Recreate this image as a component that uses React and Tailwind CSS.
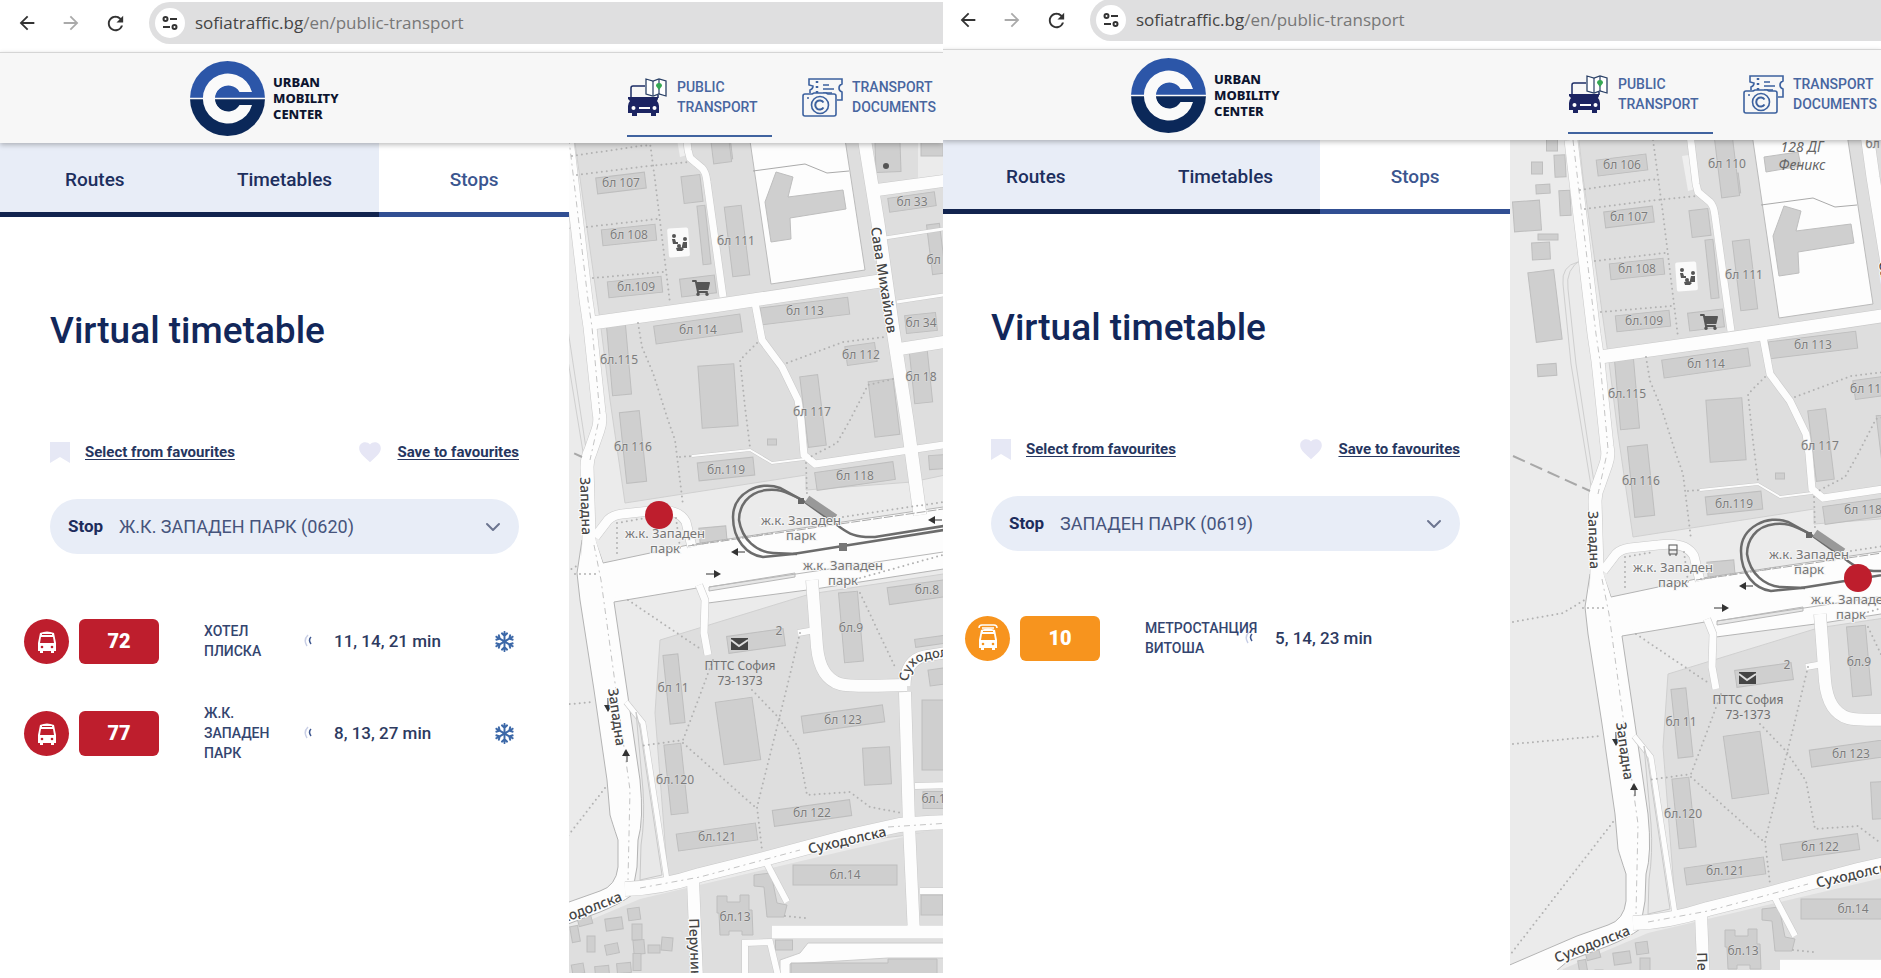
import { ChevronDown } from "lucide-react";
import { FaRegSnowflake, FaShoppingCart } from "react-icons/fa";
import { MdArrowBack, MdArrowForward, MdFavorite, MdRefresh } from "react-icons/md";

const leftView = {
  id: "left",
  stop: "Ж.К. ЗАПАДЕН ПАРК (0620)",
  origin: [569, 143],
  marker: [659, 515],
  lines: [
    { number: "72", type: "bus", direction: "ХОТЕЛ ПЛИСКА", times: "11, 14, 21 min", cooled: true },
    { number: "77", type: "bus", direction: "Ж.К. ЗАПАДЕН ПАРК", times: "8, 13, 27 min", cooled: true },
  ],
};

const rightView = {
  id: "right",
  stop: "ЗАПАДЕН ПАРК (0619)",
  origin: [502, 106],
  marker: [850, 544],
  lines: [
    { number: "10", type: "tram", direction: "МЕТРОСТАНЦИЯ ВИТОША", times: "5, 14, 23 min", cooled: false },
  ],
};

// [centre x, centre y, width, height, rotation]
const buildings = [
  [614, 131, 50, 16, -7], [621, 183, 49, 16, -7], [629, 235, 54, 16, -6], [635, 287, 54, 16, -6],
  [912, 202, 47, 14, -8], [698, 329, 87, 18, -8], [805, 311, 88, 17, -7], [921, 323, 31, 18, -6],
  [861, 354, 30, 19, -8], [726, 469, 56, 18, -6], [855, 476, 79, 18, -8], [918, 592, 60, 17, -8],
  [698, 286, 35, 18, -7], [843, 719, 82, 17, -8], [812, 813, 78, 16, -8], [717, 837, 80, 17, -8],
  [845, 875, 104, 20, 0], [756, 641, 57, 17, -8], [713, 535, 27, 16, -5], [692, 189, 19, 27, -7],
  [704, 235, 8, 59, -6], [737, 241, 17, 70, -7], [723, 150, 17, 20, -7], [719, 133, 18, 60, -7],
  [619, 360, 19, 70, -5], [633, 447, 20, 71, -6], [718, 396, 36, 62, -4], [813, 411, 18, 71, -7],
  [772, 442, 9, 6, 0], [921, 377, 18, 52, -6], [884, 408, 25, 56, -7], [936, 249, 13, 50, -7],
  [888, 157, 25, 30, -2], [932, 148, 22, 16, 0], [938, 462, 18, 14, -4], [851, 627, 19, 70, -5],
  [674, 689, 15, 69, -6], [676, 779, 17, 70, -6], [738, 731, 37, 63, -8], [877, 766, 27, 37, -3],
  [934, 735, 24, 70, 0], [934, 800, 22, 17, 0], [932, 905, 22, 20, 0], [932, 641, 34, 8, -8],
  [937, 677, 16, 16, -8], [784, 945, 17, 10, 0],
  [585, 921, 14, 8, -15], [575, 934, 8, 16, -10], [591, 944, 8, 16, 0], [614, 924, 17, 12, -8],
  [612, 949, 13, 10, -12], [634, 914, 12, 12, -8], [637, 932, 10, 16, 0], [639, 947, 11, 14, -5],
  [637, 962, 8, 17, 0], [654, 949, 12, 8, 0], [667, 944, 11, 13, 5], [578, 969, 12, 10, -10],
  [602, 970, 14, 8, -5], [624, 968, 14, 10, -5],
  [544, 110, 11, 14, 0], [529, 134, 11, 12, 0], [552, 132, 11, 22, -3], [535, 155, 14, 9, -3],
  [557, 169, 11, 25, -3], [519, 182, 27, 30, -4], [540, 203, 20, 6, 0], [533, 217, 18, 17, -3],
  [537, 272, 26, 70, -7], [539, 336, 19, 12, -4],
];

const shapes = [
  "776,172 793,177 788,197 843,190 846,209 790,218 791,239 771,242 765,202",
  "756,123 790,118 793,132 758,138",
  "717,896 727,896 727,902 740,902 740,895 749,895 749,910 752,910 753,935 742,935 742,931 729,931 729,935 720,935 719,913 717,913",
  "754,875 771,873 777,903 787,905 784,917 767,917 764,887 754,886",
  "791,963 888,963 888,959 937,959 937,980 791,980",
];

const roads = [
  { d: "M563 106L586 300L590 327L599 412Q601 422 598 430L591 450Q587 458 587 467L589 535L588 570", w: 13 },
  { d: "M592 323L720 305L880 281", w: 13 },
  { d: "M859 100L865 143L878 223L893 330L907 420L920 515", w: 13 },
  { d: "M877 190L950 180M893 350L950 341", w: 12 },
  { d: "M682 100L688 150L690 158L702 168Q706 172 707 182L723 297", w: 7 },
  { d: "M755 303L762 340L782 367L798 400L801 420L804 455L815 464L950 444", w: 7 },
  { d: "M595 537L608 520Q613 515 622 514L650 511Q678 507 686 522L692 547", w: 9 },
  { d: "M812 580L817 647Q820 678 840 684Q850 687 907 685", w: 12 },
  { d: "M905 692L909 825L914 935", w: 12 },
  { d: "M905 686Q905 660 925 656L950 652", w: 11 },
  { d: "M915 786L950 785M920 891L950 891M798 633L815 630", w: 6 },
  { d: "M699 585L705 600L704 633L708 655", w: 7 },
  { d: "M626 702L643 723L667 880", w: 5 },
  { d: "M625 889Q660 888 700 875L760 860L850 836L900 825Q920 823 950 822", w: 14 },
  { d: "M693 880L697 980", w: 12 },
  { d: "M766 862L787 902", w: 6 },
  { d: "M772 932L950 932", w: 13 },
  { d: "M745 980L745 943L770 942L779 980", w: 6 },
  { d: "M692 456L750 450L772 463L804 459", w: 2 },
  { d: "M885 238L950 228M897 302L950 294", w: 3 },
];

const footpaths =
  "M572 156L640 146L650 145M577 175L640 167L690 162M645 106L655 180L670 303M587 227L657 219M593 278L663 272" +
  "M638 323L642 347L653 373L668 420L675 440L683 505M757 343L740 360L745 407L750 447" +
  "M787 363L843 342L885 337M893 379L868 385L850 420L837 443L810 457M806 463L807 495" +
  "M628 600L702 650M860 593L895 667M800 633L787 687L778 723L757 807L762 850" +
  "M713 660L700 695L683 740L640 746M683 743L755 807M752 690L778 717L798 747L807 795L850 792L870 807L902 813" +
  "M505 710L593 702M605 788L502 921M843 517L943 502M693 545L773 533M617 523L646 518M617 523L617 556" +
  "M505 588L555 579L580 564M575 574L597 574M676 518L680 548M785 916L805 918M860 578L950 553M680 457L692 456";

const labels = [
  [614, 131, "бл 106"], [621, 183, "бл 107"], [629, 235, "бл 108"], [636, 287, "бл.109"],
  [719, 130, "бл 110"], [736, 241, "бл 111"], [698, 330, "бл 114"], [805, 311, "бл 113"],
  [912, 202, "бл 33"], [921, 323, "бл 34"], [861, 355, "бл 112"], [921, 377, "бл 18"],
  [619, 360, "бл.115"], [633, 447, "бл 116"], [812, 412, "бл 117"], [726, 470, "бл.119"],
  [855, 476, "бл 118"], [927, 590, "бл.8"], [851, 628, "бл.9"], [673, 688, "бл 11"],
  [843, 720, "бл 123"], [675, 780, "бл.120"], [812, 813, "бл 122"], [717, 837, "бл.121"],
  [845, 875, "бл.14"], [735, 917, "бл.13"], [942, 260, "бл 32"], [937, 799, "бл.16"],
  [873, 110, "бл 31"], [779, 631, "2"],
];

const streets = [
  [884, 280, 81, "Сава Михайлов"],
  [586, 506, 88, "Западна"],
  [617, 717, 82, "Западна"],
  [847, 840, -13, "Суходолска"],
  [584, 910, -21, "Суходолска"],
  [695, 948, 88, "Перуник"],
];

function BrowserBar() {
  return (
    <div className="flex h-[52px] items-start bg-white pt-0.5">
      <div className="flex h-[42px] w-[149px] shrink-0 items-center gap-[22px] pl-4">
        <button type="button" aria-label="Back" className="text-[#333]">
          <MdArrowBack size={22} />
        </button>
        <button type="button" aria-label="Forward" className="text-[#aaa]">
          <MdArrowForward size={22} />
        </button>
        <button type="button" aria-label="Reload" className="text-[#333]">
          <MdRefresh size={23} />
        </button>
      </div>
      <div className="flex h-[42px] min-w-0 flex-1 items-center gap-2.5 rounded-l-full bg-[#dfdfe0] pl-1.5">
        <span className="flex size-[30px] shrink-0 items-center justify-center rounded-full bg-white">
          <svg width="16" height="14" viewBox="0 0 16 14" fill="none" stroke="#333" strokeWidth="2">
            <circle cx="3.5" cy="3" r="2" />
            <path d="M8 3h7M1 11h7" />
            <circle cx="12.5" cy="11" r="2" />
          </svg>
        </span>
        <span className="truncate font-['Open_Sans',sans-serif] text-[17px] leading-6 text-[#777]">
          <span className="text-[#444]">sofiatraffic.bg</span>/en/public-transport
        </span>
      </div>
    </div>
  );
}

function Logo() {
  return (
    <a href="#" className="flex w-[437px] shrink-0 items-center gap-2">
      <svg width="75" height="75" viewBox="0 0 75 75">
        <path d="M0 37.5a37.5 37.5 0 0 1 75 0z" fill="#2c56a8" />
        <path d="M0 37.5a37.5 37.5 0 0 0 75 0z" fill="#0b2859" />
        <path
          d="M62 31H49.5A13 13 0 1 0 49.5 44H62A25 25 0 1 1 62 31z"
          fill="#fafafa"
        />
        <path d="M25 37a12.500 12.500 0 0 1 23-6H62v6z" fill="#2c56a8" />
        <path d="M25 38a12.500 12.500 0 0 0 23 6H62v-6z" fill="#0b2859" />
        <path d="M0 37.500H75" stroke="#fafafa" strokeWidth="1.500" />
      </svg>
      <span className="font-['Noto_Sans',sans-serif] text-[13px] leading-4 font-extrabold text-[#0d1530]">
        URBAN
        <br />
        MOBILITY
        <br />
        CENTER
      </span>
    </a>
  );
}

function TransportIcon() {
  return (
    <svg width="40" height="40" viewBox="0 0 40 40" fill="none">
      <path d="M4 20V11Q4 9 6 9H18M31 18v3" stroke="#1c2d66" strokeWidth="1.500" />
      <path d="M19 2l7 2 6-2 7 2v15l-7-2-6 2-7-2z" fill="#fff" stroke="#2a4066" strokeWidth="1.300" />
      <path d="M26 4v15M32 2v15" stroke="#2a4066" strokeWidth="1.200" />
      <path d="M32 13l-3-4a3 3 0 1 1 6 0z" fill="#35a853" />
      <path
        d="M3 20h28v2l-1 2q2 2 2 5v7h-3v3h-5v-3H10v3H5v-3H1v-7q0-3 2-5l-2-2v-2z"
        fill="#1c2462"
      />
      <path d="M12 30h11v2H12z" fill="#fff" />
      <circle cx="6.500" cy="31" r="2" fill="#fff" />
      <circle cx="27.500" cy="31" r="2" fill="#fff" />
    </svg>
  );
}

function DocumentsIcon() {
  return (
    <svg width="42" height="40" viewBox="0 0 42 40" fill="none" stroke="#3c619f" strokeWidth="1.600">
      <path d="M8 16v-3q3-1 3-4L7 8V2h33v5q-3 1-3 4t3 4v8h-5" />
      <path d="M15 4v2M15 9v2M15 14v2" strokeWidth="2.500" />
      <path d="M21 8h6M21 12h11M21 16h9" />
      <path d="M10 17l2-1h12l2 1h6q2 0 2 2v18q0 2-2 2H3q-2 0-2-2V19q0-2 2-2z" fill="#f7f7f7" />
      <circle cx="18" cy="28" r="8.500" />
      <path d="M21.500 25.500a4.500 4.500 0 1 0 0 5" strokeWidth="2" />
      <path d="M5 21h2" />
    </svg>
  );
}

function Header() {
  return (
    <header className="relative z-10 flex h-[91px] overflow-clip border-t border-[#d5d5d5] bg-[#f7f7f7] pl-[190px] shadow-[0_2px_5px_rgba(0,0,0,0.25)] [overflow-clip-margin:8px]">
      <Logo />
      <nav className="flex shrink-0 gap-[30px] pt-6 text-sm leading-5 font-medium text-[#4866a0]">
        <a href="#" className="flex h-[60px] w-[145px] shrink-0 items-start gap-2.5 border-b-2 border-[#40639f]">
          <TransportIcon />
          <span>
            PUBLIC
            <br />
            TRANSPORT
          </span>
        </a>
        <a href="#" className="flex shrink-0 items-start gap-2">
          <DocumentsIcon />
          <span>
            TRANSPORT
            <br />
            DOCUMENTS
          </span>
        </a>
      </nav>
    </header>
  );
}

function Tabs() {
  return (
    <div role="tablist" className="grid h-[74px] grid-cols-3 text-[19px] leading-6 font-medium">
      <button type="button" role="tab" className="border-b-5 border-[#12244f] bg-[#e8edf7] pt-1 text-[#1d2f5e]">
        Routes
      </button>
      <button type="button" role="tab" className="border-b-5 border-[#12244f] bg-[#e8edf7] pt-1 text-[#1d2f5e]">
        Timetables
      </button>
      <button
        type="button"
        role="tab"
        aria-selected="true"
        className="border-b-5 border-[#314f93] bg-white pt-1 text-[#3b568f]"
      >
        Stops
      </button>
    </div>
  );
}

function VehicleIcon({ type }) {
  const color = type === "bus" ? "#be1e2d" : "#f7941e";
  return (
    <svg width="20" height="28" viewBox="0 0 20 28">
      {type === "tram" && <path d="M1 4q0-3 3-3h12q3 0 3 3M4 4h12" fill="none" stroke="#fff" strokeWidth="1.500" />}
      <path
        d="M3 6q7-3 14 0l2 10v8h-2v2h-3v-2H6v2H3v-2H1v-8z"
        fill="#fff"
      />
      <path d="M5 7h10v1H5zM4 10h12l1 6H3z" fill={color} />
      <circle cx="5" cy="20" r="1.300" fill={color} />
      <circle cx="15" cy="20" r="1.300" fill={color} />
    </svg>
  );
}

function LineRow({ line }) {
  const color = line.type === "bus" ? "bg-[#be1e2d]" : "bg-[#f7941e]";
  return (
    <li className="flex h-[92px] items-center">
      <span className={`flex size-[45px] shrink-0 items-center justify-center rounded-full ${color}`}>
        <VehicleIcon type={line.type} />
      </span>
      <span
        className={`ml-2.5 flex h-[45px] w-20 shrink-0 items-center justify-center rounded-md text-xl font-black text-white ${color}`}
      >
        {line.number}
      </span>
      <span className="ml-[45px] w-[100px] shrink-0 text-sm leading-5 font-medium text-[#34456f]">
        <span className="block w-[60px]">{line.direction}</span>
      </span>
      <svg width="10" height="14" viewBox="0 0 10 14" className="shrink-0" fill="none">
        <path d="M4 1Q-1 6 3 12" stroke="#c9cfe6" strokeWidth="1.500" />
        <path d="M7 3Q4 6 7 10" stroke="#3d568f" strokeWidth="1.500" />
      </svg>
      <span className="ml-5 flex-1 text-[17px] leading-6 font-medium whitespace-nowrap text-[#2d3a5f]">
        {line.times}
      </span>
      {line.cooled && <FaRegSnowflake size={21} className="shrink-0 text-[#3c68a8]" />}
    </li>
  );
}

function Timetable({ view }) {
  const selectId = `stop-${view.id}`;
  return (
    <div className="w-[569px] bg-white">
      <Tabs />
      <div className="px-[50px] pt-[90px]">
        <h1 className="text-[37px] leading-12 font-medium text-[#12275a]">Virtual timetable</h1>
        <div className="mt-[84px] flex items-center justify-between text-[15px] leading-6 font-bold text-[#26365f]">
          <a href="#" className="flex items-center gap-[15px] underline underline-offset-2">
            <svg width="20" height="21" viewBox="0 0 20 21" fill="#e6e8f5">
              <path d="M0 0h20v21l-10-6-10 6z" />
            </svg>
            Select from favourites
          </a>
          <a href="#" className="flex items-center gap-[14px] underline underline-offset-2">
            <MdFavorite size={26} className="text-[#e6e6f5]" />
            Save to favourites
          </a>
        </div>
        <div className="mt-[34px] flex h-[55px] items-center rounded-full bg-[#e8edf7] px-[18px]">
          <label htmlFor={selectId} className="w-[51px] text-[17px] font-bold text-[#1d2c5c]">
            Stop
          </label>
          <select
            id={selectId}
            defaultValue={view.stop}
            className="min-w-0 flex-1 appearance-none bg-transparent text-lg text-[#46547c] outline-none"
          >
            <option>{view.stop}</option>
          </select>
          <ChevronDown size={24} className="pointer-events-none -mr-1 shrink-0 text-[#6c7590]" />
        </div>
      </div>
      <ul className="mt-[41px] pr-[54px] pl-6">
        {view.lines.map((line) => (
          <LineRow key={line.number} line={line} />
        ))}
      </ul>
    </div>
  );
}

function StopLabel({ x, y }) {
  return (
    <text x={x} y={y} fontSize="13" fill="#777" stroke="#f4f4f4" strokeWidth="2" paintOrder="stroke" textAnchor="middle">
      <tspan x={x}>ж.к. Западен</tspan>
      <tspan x={x} dy="15">
        парк
      </tspan>
    </text>
  );
}

function StreetMap({ view }) {
  const [ox, oy] = view.origin;
  const curveId = `curve-${view.id}`;
  return (
    <div className="relative min-w-0 flex-1 overflow-hidden bg-[#ebebeb]">
      <svg className="absolute inset-0 h-full w-full font-['Noto_Sans',sans-serif]" aria-label="Map">
        <g transform={`translate(${-ox} ${-oy})`}>
          {/* land */}
          <path
            d="M571 106H950V474L912 482L806 490V475L625 503L610 400L600 320L575 143z"
            fill="#dedede"
            stroke="#d0d0d0"
          />
          <path d="M660 640L810 594L950 573V830L808 847L668 880L655 713z" fill="#dedede" stroke="#d0d0d0" />
          <path d="M555 935L640 899L950 826V980H540z" fill="#dedede" />
          <path d="M744 100H839L865 270L771 284z" fill="#fdfdfd" stroke="#bbb" />
          <path d="M753 171L805 164L827 173L849 171" fill="none" stroke="#aaa" />
          <path d="M918 143L943 143V178L918 184z" fill="#ebebeb" />
          <path d="M780 960L800 953L808 943H950V958H888L790 964V980H780z" fill="#fdfdfd" stroke="#ccc" />
          <path d="M570 228Q553 232 555 250L563 330L584 458M574 225Q557 235 560 255L568 330L587 455" fill="none" stroke="#cfcfcf" />

          {/* buildings */}
          <g fill="#cfcfcf" stroke="#bebebe">
            {buildings.map(([x, y, w, h, r]) => (
              <rect
                key={`${x}-${y}`}
                x={x - w / 2}
                y={y - h / 2}
                width={w}
                height={h}
                transform={`rotate(${r} ${x} ${y})`}
              />
            ))}
            {shapes.map((points) => (
              <polygon key={points} points={points} />
            ))}
          </g>
          <rect x="668" y="228" width="21" height="29" rx="2" fill="#fafafa" transform="rotate(-4 678 242)" />
          <path d="M674 122L681 121L687 155L680 157z" fill="#efefef" />

          {/* roads, casings first */}
          <path
            d="M582 540L577 573L580 600L594 690L607 780L610 815Q612 822 618 840L618 867Q616 886 600 891L569 902L490 936V985L560 927L600 912Q620 904 632 895L637 867L638 840Q644 820 640 780L627 690L614 602L697 588L708 603L815 589L950 568V506L688 545L603 563L595 540z"
            fill="#fdfdfd"
            stroke="#b4b4b4"
          />
          <g fill="none" stroke="#c9c9c9">
            {roads.map((road) => (
              <path key={road.d} d={road.d} strokeWidth={road.w + 1} />
            ))}
          </g>
          <g fill="none" stroke="#fdfdfd">
            {roads.map((road) => (
              <path key={road.d} d={road.d} strokeWidth={road.w} />
            ))}
          </g>
          <path d="M583 540L594 535L603 564L650 560V590L614 598L590 600L579 574z" fill="#fdfdfd" />
          <path d="M636 712L640 728L662 875L640 880L641 845Q645 820 643 790z" fill="#e8e8e8" stroke="#c9c9c9" />
          <path d="M709 587L950 551M709 591L795 577L795 573L709 587z" fill="#e6e6e6" stroke="#b8b8b8" />
          <path d="M688 546L950 508" fill="none" stroke="#aaa" strokeDasharray="9 2" />
          <path
            d="M565 106L588 300L592 327L600 415L590 460M594 545L601 580L616 690L630 790L628 880M640 888L700 877L800 850M888 827L950 823"
            fill="none"
            stroke="#c4c4c4"
            strokeDasharray="6 4 2 4"
          />
          <path d={footpaths} fill="none" stroke="#b2b2b2" strokeWidth="2" strokeLinecap="round" strokeDasharray="0 5" />
          <path d="M505 422L582 457" stroke="#a8a8a8" strokeWidth="2" strokeDasharray="13 6" />

          {/* tram tracks */}
          <g fill="none" stroke="#6c6c6c" strokeWidth="2.500">
            <path d="M950 525L875 537C853 538 847 532 837 525L802 500L780 488C760 480 733 493 733 517C733 540 747 555 763 557L793 554L843 546L950 529" />
            <path d="M802 500C783 490 777 489 767 490C747 492 739 507 739 520C742 540 757 552 773 553L797 554" />
            <path d="M807 499L835 518" stroke="#999" strokeWidth="8" />
          </g>
          <rect x="798" y="498" width="6" height="6" fill="#666" />
          <rect x="839" y="543" width="8" height="8" fill="#777" />
          <path d="M733 552h12M706 574h12M930 520h12" stroke="#333" />
          <path d="M731 552l7-4v8zM721 574l-7-4v8zM928 520l7-4v8z" fill="#333" />
          <path d="M608 698v9M627 762v-9" stroke="#333" />
          <path d="M608 712l-4-7h8zM626 749l-4 7h8z" fill="#333" />

          {/* points of interest */}
          <FaShoppingCart x="692" y="279" size={18} color="#555" />
          <g fill="#555">
            <circle cx="674" cy="236" r="2" />
            <circle cx="685" cy="239" r="2" />
            <circle cx="679" cy="246" r="2" />
            <path d="M672 239h3l1 3h2v2h-5zM683 242h4v6h-5v-2zM676 248l5-1 3 2-2 2h-5z" />
            <circle cx="886" cy="166" r="3" />
          </g>
          <path d="M731 638h17v12h-17z" fill="#444" />
          <path d="M731 640l8 6 9-6" fill="none" stroke="#ddd" strokeWidth="2" />
          <g fill="none" stroke="#555">
            <rect x="661" y="511" width="8" height="9" />
            <path d="M661 516h8M662 520v2M668 520v2" />
          </g>

          <g fontSize="12" fill="#7c7c7c" textAnchor="middle" stroke="#dedede" strokeWidth="1" paintOrder="stroke">
            {labels.map(([x, y, text]) => (
              <text key={`${x}-${y}`} x={x} y={y + 4}>
                {text}
              </text>
            ))}
          </g>
          <g fontSize="14" fill="#666" textAnchor="middle" fontStyle="italic">
            <text x="794" y="118">128 ДГ</text>
            <text x="794" y="136">Феникс</text>
          </g>
          <StopLabel x={665} y={538} />
          <StopLabel x={801} y={525} />
          <StopLabel x={843} y={570} />
          <g fontSize="12" fill="#707070" textAnchor="middle">
            <text x="740" y="670">ПТТС София</text>
            <text x="740" y="685">73-1373</text>
          </g>
          <g
            fontSize="14"
            fontWeight="500"
            fill="#444"
            textAnchor="middle"
            stroke="#fdfdfd"
            strokeWidth="2"
            paintOrder="stroke"
          >
            {streets.map(([x, y, r, name]) => (
              <text key={`${x}-${y}`} x={x} y={y + 5} transform={`rotate(${r} ${x} ${y})`}>
                {name}
              </text>
            ))}
          </g>
          <path id={curveId} d="M908 682Q910 664 925 660L990 648" fill="none" />
          <text fontSize="13" fontWeight="500" fill="#444" stroke="#fdfdfd" strokeWidth="2" paintOrder="stroke">
            <textPath href={`#${curveId}`}>Суходолска</textPath>
          </text>

          <circle cx={view.marker[0]} cy={view.marker[1]} r="14" fill="#be1e2d" />
        </g>
      </svg>
    </div>
  );
}

function Page({ view }) {
  return (
    <>
      <BrowserBar />
      <Header />
      <main className="flex min-h-[830px]">
        <Timetable view={view} />
        <StreetMap view={view} />
      </main>
    </>
  );
}

function App() {
  return (
    <div className="grid min-h-screen grid-cols-[943fr_938fr] items-start bg-white font-[Roboto,sans-serif]">
      <section className="min-w-0 overflow-hidden">
        <Page view={leftView} />
      </section>
      <section className="min-w-0 overflow-hidden">
        <div className="-mt-[3px] -ml-0.5">
          <Page view={rightView} />
        </div>
      </section>
    </div>
  );
}

export default App;
